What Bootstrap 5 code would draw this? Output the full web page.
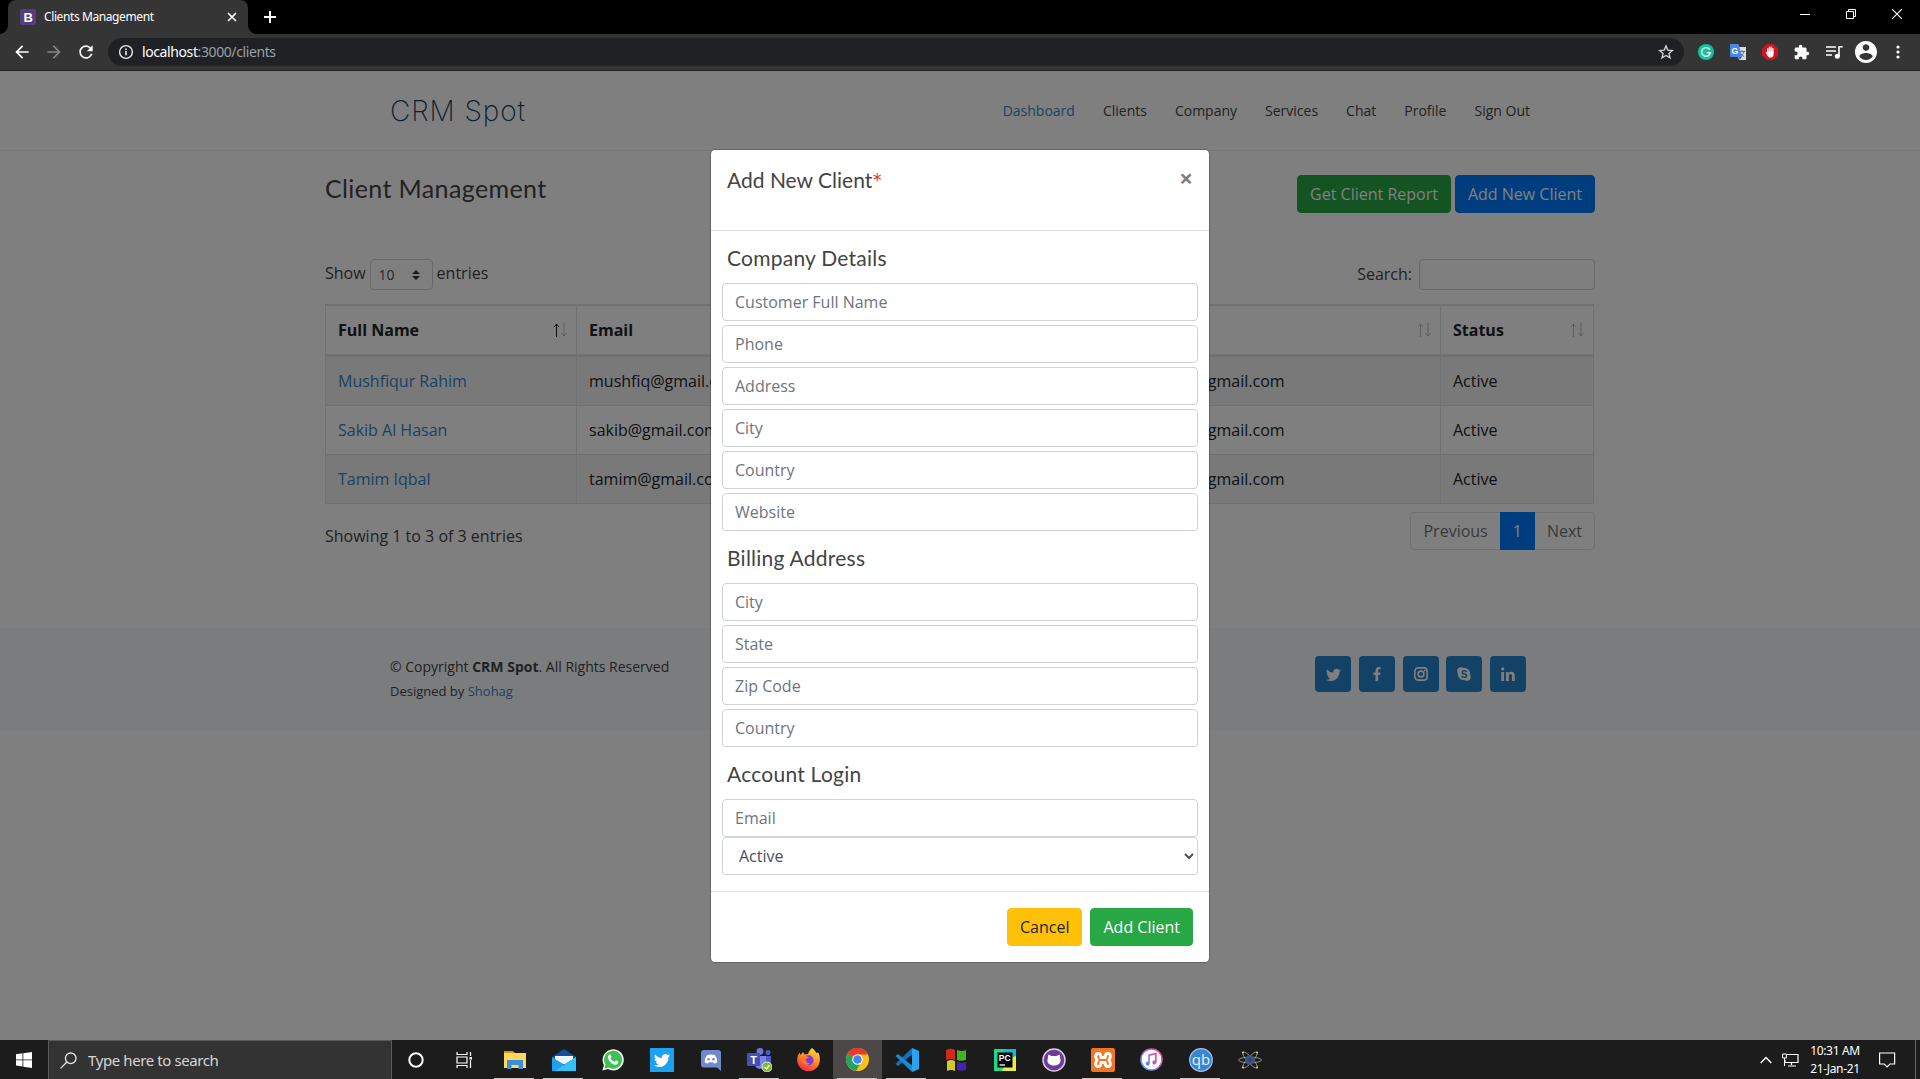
<!DOCTYPE html>
<html lang="en">
<head>
<meta charset="utf-8">
<title>Clients Management</title>
<link href="https://cdn.jsdelivr.net/npm/bootstrap@5.3.0/dist/css/bootstrap.min.css" rel="stylesheet">
<style>
  body { height: 1079px; overflow: hidden; font-family: "Open Sans", "Noto Sans", sans-serif; color: #444; background: #fff; }
  svg { display: block; flex: none; }
  .ui-font { font-family: "Noto Sans", "Open Sans", sans-serif; }

  /* browser chrome */
  .tabstrip { height: 34px; background: #000; padding-left: 8px; color: #fff; }
  .tab-item { width: 240px; height: 34px; background: #353535; border-radius: 8px 8px 0 0; padding: 0 11px 0 12px; font-size: 12px; letter-spacing: -.4px; position: relative; }
  .tab-item::before, .tab-item::after { content: ""; position: absolute; bottom: 0; width: 8px; height: 8px; }
  .tab-item::before { left: -8px; background: radial-gradient(circle at 0 0, #000 7.5px, #353535 8px); }
  .tab-item::after { right: -8px; background: radial-gradient(circle at 100% 0, #000 7.5px, #353535 8px); }
  .win-cell { width: 46px; height: 28px; }
  .toolbar { height: 37px; background: #353535; border-bottom: 1px solid #222; padding: 0 6px; }
  .tool-cell { width: 32px; height: 35px; }
  .omnibox { height: 28px; border-radius: 14px; background: #202124; margin: 0 6px; padding: 0 10px; font-size: 14px; letter-spacing: -.4px; line-height: 20px; color: #9aa0a6; }
  .omnibox b { color: #fff; font-weight: 400; }
  .omnibox span { padding-bottom: 1px; }

  /* page */
  .viewport { height: 969px; background: #fff; overflow: hidden; }
  .inner { width: 1140px; margin: 0 auto; }
  .site-head { height: 80px; border-bottom: 1px solid #f0f0f0; }
  .brand { font-family: Inter, sans-serif; font-weight: 200; font-size: 28px; letter-spacing: .9px; color: #124265; }
  .site-nav { gap: 28px; font-size: 14px; }
  .site-nav a { color: #124265; text-decoration: none; white-space: nowrap; }
  .site-nav a.on, .lnk { color: #3584c6 !important; text-decoration: none; }
  .board { width: 1270px; margin: 0 auto; padding-top: 24px; height: 477px; }
  .raleway { font-family: Lato, "Open Sans", sans-serif; font-weight: 400; color: #444; margin: 0; }
  .board-title { font-size: 25px; line-height: 27px; letter-spacing: .38px; }
  .btn { --bs-btn-border-radius: 4px; white-space: nowrap; }
  .btn-primary { --bs-btn-bg: #007bff; --bs-btn-border-color: #007bff; }
  .btn-success { --bs-btn-bg: #28a745; --bs-btn-border-color: #28a745; }
  .btn-warning { --bs-btn-bg: #ffc107; --bs-btn-border-color: #ffc107; --bs-btn-color: #212529; }
  .list-tools { margin-top: 46px; height: 31px; }
  .len-label { padding-bottom: 4px; }
  .len-box { width: 63px; height: 31px; border: 1px solid #ced4da; border-radius: 4px; font-size: 14px; color: #495057; padding: 0 12px 0 8px; margin: 0 4px; }
  .find-label { margin-right: 7px; padding-bottom: 2px; }
  .find-box { width: 176px; height: 31px; border: 1px solid #ced4da; border-radius: 4px; background: #fff; }
  .clients { width: 1269px; table-layout: fixed; margin: 14px 0 0; border: 1px solid #dee2e6; border-right: 0; border-collapse: separate; border-spacing: 0; color: #212529; }
  .clients > :not(caption) > * > * { padding: 12px; border: 0 solid #dee2e6; border-top-width: 1px; border-right-width: 1px; }
  .clients > tbody > tr > td.admin { padding-left: 14px; }
  .clients thead th { border-bottom-width: 2px; color: #212529; padding-right: 9px; }
  .clients tbody tr:nth-child(odd) td { background: #f2f2f2; box-shadow: none; }
  .list-foot { margin-top: 8px; }
  .pagination { --bs-pagination-border-color: #dee2e6; --bs-pagination-border-radius: 4px; --bs-pagination-disabled-bg: #fff; --bs-pagination-disabled-color: #6c757d; --bs-pagination-active-bg: #007bff; --bs-pagination-active-border-color: #007bff; }
  .site-foot { height: 103px; background: #f7f9fc; font-size: 14px; }
  .site-foot .by { font-size: 13px; line-height: 20px; }
  .socials { gap: 7.8px; padding-right: 3.8px; }
  .soc { width: 36px; height: 36px; border-radius: 4px; background: #2487ce; color: #fff; }

  /* dialog */
  .shade { position: absolute; inset: 0; background: rgba(0,0,0,.5); z-index: 10; }
  .modal.inpage { position: absolute; overflow: hidden; }
  .modal-dialog { margin-top: 78px; width: 500px; max-width: 500px; }
  .modal-content { --bs-modal-border-radius: 5px; border: 1px solid rgba(0,0,0,.2); border-radius: 5px; color: #444; }
  .modal-header { height: 81px; padding: 16px; align-items: flex-start; border-color: #dee2e6; }
  .modal-header, .modal-footer { border-color: #dee2e6; }
  .dlg-h { font-size: 21px; line-height: 22px; height: 24px; letter-spacing: .24px; }
  .dlg-title { padding-top: 3px; letter-spacing: 0; }
  .star { color: #e03a3c; font-family: Inter, sans-serif; font-weight: 300; font-size: 20px; line-height: 1; }
  .xmark { font-size: 24px; line-height: 1; font-weight: 700; color: #7f7f7f; }
  .fields { margin: 12px -5px 16px; display: flex; flex-direction: column; gap: 4px; }
  .form-control { height: 38px; border: 1px solid #ced4da; border-radius: 4px; color: #495057; }
  .form-control::placeholder { color: #6c757d; }
  select.form-control { appearance: auto; padding-right: 12px; }
  .modal-footer { padding: 16px 16px 16px 15px; gap: 8px; }
  .modal-footer > * { margin: 0; }

  /* taskbar */
  .taskbar { height: 39px; background: #1d1c1c; color: #fff; }
  .start { width: 48px; height: 39px; }
  .seek { width: 344px; height: 39px; background: #333; border: 1px solid #5a5a5a; border-bottom: 0; padding-left: 11px; font-size: 15px; letter-spacing: -.4px; color: #d6d6d6; }
  .seek-text { margin-left: 11px; }
  .app { width: 49px; height: 39px; position: relative; }
  .app.shift { padding-right: 2px; }
  .app.run::after { content: ""; position: absolute; bottom: 0; left: 4px; width: 40px; height: 1px; background: #c9c2c2; }
  .app.cur { background: #4c4848; }
  .net { margin-left: 10px; }
  .clock { font-size: 12px; line-height: 18px; width: 64px; letter-spacing: -.35px; }
  .note { margin: 0 17px 0 9px; }
  .peek { width: 5px; height: 39px; border-left: 1px solid #666; }
</style>
</head>
<body class="d-flex flex-column">

<div class="tabstrip d-flex align-items-center ui-font flex-shrink-0">
  <div class="tab-item d-flex align-items-center">
    <svg width="16" height="16" viewBox="0 0 16 16"><rect width="16" height="16" rx="2" fill="#563d7c"/><text x="8" y="12.6" font-size="13" font-weight="700" text-anchor="middle" fill="#fff" font-family="Liberation Sans">B</text></svg>
    <span class="ms-2 flex-grow-1">Clients Management</span>
    <svg width="10" height="10" viewBox="0 0 10 10"><path d="M1 1l8 8M9 1l-8 8" stroke="#fff" stroke-width="1.7"/></svg>
  </div>
  <svg class="ms-3" width="12" height="12" viewBox="0 0 12 12"><path d="M6 0v12M0 6h12" stroke="#fff" stroke-width="2"/></svg>
  <div class="ms-auto d-flex align-self-start">
    <div class="win-cell d-flex align-items-center justify-content-center"><svg width="10" height="10"><path d="M0 5.5h10" stroke="#fff"/></svg></div>
    <div class="win-cell d-flex align-items-center justify-content-center"><svg width="10" height="10"><path d="M.5 2.5h7v7h-7zM2.500 2.500v-2h7v7h-2" stroke="#fff" fill="none"/></svg></div>
    <div class="win-cell d-flex align-items-center justify-content-center"><svg width="10" height="10"><path d="M0 0l10 10M10 0L0 10" stroke="#fff" stroke-width="1.1"/></svg></div>
  </div>
</div>

<div class="toolbar d-flex align-items-center ui-font flex-shrink-0">
  <div class="tool-cell d-flex align-items-center justify-content-center"><svg width="20" height="20" viewBox="0 0 24 24" fill="#fff"><path d="M20 11H7.830l5.590-5.590L12 4l-8 8 8 8 1.410-1.410L7.830 13H20z"/></svg></div>
  <div class="tool-cell d-flex align-items-center justify-content-center"><svg width="20" height="20" viewBox="0 0 24 24" fill="#858585"><path d="M4 13h12.170l-5.590 5.590L12 20l8-8-8-8-1.410 1.410L16.170 11H4z"/></svg></div>
  <div class="tool-cell d-flex align-items-center justify-content-center"><svg width="20" height="20" viewBox="0 0 24 24" fill="#fff"><path d="M17.650 6.350A7.958 7.958 0 0 0 12 4c-4.420 0-7.990 3.580-7.990 8s3.570 8 7.990 8c3.730 0 6.840-2.550 7.730-6h-2.080A5.990 5.990 0 0 1 12 18c-3.310 0-6-2.690-6-6s2.690-6 6-6c1.660 0 3.140.69 4.220 1.780L13 11h7V4z"/></svg></div>
  <div class="omnibox d-flex align-items-center flex-grow-1">
    <svg width="16" height="16" viewBox="0 0 16 16"><circle cx="8" cy="8" r="6.400" fill="none" stroke="#e8eaed" stroke-width="1.400"/><path d="M8 7v4.200M8 4.400V6" stroke="#e8eaed" stroke-width="1.600"/></svg>
    <span class="ms-2"><b>localhost</b>:3000/clients</span>
    <svg class="ms-auto" width="16" height="16" viewBox="0 0 24 24"><path d="M12 2.800l2.700 6.300 6.900.6-5.200 4.500 1.600 6.700-6-3.600-6 3.600 1.600-6.700L2.400 9.700l6.900-.6z" fill="none" stroke="#d2d4d7" stroke-width="2"/></svg>
  </div>
  <div class="tool-cell d-flex align-items-center justify-content-center"><svg width="16" height="16" viewBox="0 0 16 16"><circle cx="8" cy="8" r="8" fill="#15c39a"/><path d="M11.800 5.600A4.400 4.400 0 1 0 12.400 8.700H8.700M10.700 10.800l1.700-2.100" fill="none" stroke="#fff" stroke-width="1.300"/></svg></div>
  <div class="tool-cell d-flex align-items-center justify-content-center"><svg width="16" height="16" viewBox="0 0 16 16"><path d="M6 3h10v13H9z" fill="#dadce0"/><path d="M9 7.500h6M12 6.300v1.200M14 7.500c-.5 2.500-2.500 4-4 5M10.700 9.500c.8 1.500 2.300 2.600 3.500 3.200" stroke="#5f6f86" fill="none"/><path d="M0 0h8.500L12 13H1a1 1 0 0 1-1-1z" fill="#4a86e8"/><path d="M9 13h2.800L9.700 16z" fill="#2a56c6"/><text x="4.900" y="9.500" font-size="8.500" font-weight="700" text-anchor="middle" fill="#fff" font-family="Liberation Sans">G</text></svg></div>
  <div class="tool-cell d-flex align-items-center justify-content-center"><svg width="16" height="16" viewBox="0 0 16 16"><path d="M4.700 0h6.600L16 4.700v6.600L11.300 16H4.700L0 11.300V4.700z" fill="#d8101c"/><path d="M5.700 9V5M7.400 9V3.400M9.100 9V2.900M10.800 9V4.400" stroke="#fff" stroke-width="1.400" stroke-linecap="round"/><path d="M3.600 8.300c.7-.5 1.200.1 1.500.7V7.500h6.400v3c0 2.300-1.300 3.100-3 3.100s-2.700-.6-4.900-5.300z" fill="#fff"/></svg></div>
  <div class="tool-cell d-flex align-items-center justify-content-center"><svg width="16" height="16" viewBox="1 0 23 23" fill="#fff"><path d="M20.500 11H19V7c0-1.100-.9-2-2-2h-4V3.500C13 2.120 11.880 1 10.500 1S8 2.120 8 3.500V5H4c-1.100 0-1.990.9-1.990 2v3.800H3.500c1.490 0 2.700 1.210 2.700 2.700s-1.210 2.700-2.700 2.700H2V20c0 1.100.9 2 2 2h3.800v-1.500c0-1.490 1.210-2.700 2.700-2.700s2.700 1.210 2.700 2.700V22H17c1.100 0 2-.9 2-2v-4h1.500c1.380 0 2.500-1.120 2.500-2.500S21.880 11 20.500 11z"/></svg></div>
  <div class="tool-cell d-flex align-items-center justify-content-center"><svg width="17" height="14" viewBox="0 0 17 14"><path d="M0 2h10M0 6h10M0 10h6" stroke="#fff" stroke-width="1.600"/><path d="M13 11V1.700h3.700" fill="none" stroke="#fff" stroke-width="1.600"/><circle cx="11.300" cy="11.200" r="2.500" fill="#fff"/></svg></div>
  <div class="tool-cell d-flex align-items-center justify-content-center"><svg width="22" height="22" viewBox="2 2 20 20" fill="#fff"><path d="M12 2C6.480 2 2 6.480 2 12s4.480 10 10 10 10-4.480 10-10S17.520 2 12 2zm0 3c1.660 0 3 1.340 3 3s-1.340 3-3 3-3-1.340-3-3 1.340-3 3-3zm0 14.200c-2.500 0-4.710-1.280-6-3.220.03-1.990 4-3.080 6-3.080 1.990 0 5.970 1.090 6 3.080-1.290 1.940-3.500 3.220-6 3.220z"/></svg></div>
  <div class="tool-cell d-flex align-items-center justify-content-center"><svg width="4" height="14" fill="#fff"><circle cx="2" cy="2" r="1.600"/><circle cx="2" cy="7" r="1.600"/><circle cx="2" cy="12" r="1.600"/></svg></div>
</div>

<main class="viewport position-relative flex-shrink-0">
  <header class="site-head">
    <div class="inner h-100 d-flex align-items-center justify-content-between">
      <div class="brand">CRM Spot</div>
      <nav class="site-nav d-flex">
        <a class="on">Dashboard</a><a>Clients</a><a>Company</a><a>Services</a><a>Chat</a><a>Profile</a><a>Sign Out</a>
      </nav>
    </div>
  </header>

  <section class="board">
    <div class="d-flex justify-content-between align-items-start">
      <h4 class="raleway board-title">Client Management</h4>
      <div class="d-flex gap-1"><button class="btn btn-success">Get Client Report</button><button class="btn btn-primary">Add New Client</button></div>
    </div>
    <div class="list-tools d-flex justify-content-between align-items-center">
      <div class="d-flex align-items-center"><span class="len-label">Show</span>
        <span class="len-box d-flex align-items-center justify-content-between">10
          <svg width="8" height="10" viewBox="0 0 8 10"><path d="M0 4l4-4 4 4zM0 6l4 4 4-4z" fill="#343a40"/></svg></span>
        <span class="len-label">entries</span></div>
      <div class="d-flex align-items-center"><span class="find-label">Search:</span><span class="find-box"></span></div>
    </div>
    <table class="table clients">
      <colgroup><col style="width:251px"><col style="width:300px"><col style="width:248px"><col style="width:316px"><col></colgroup>
      <thead><tr>
        <th><div class="d-flex justify-content-between align-items-center">Full Name<svg width="14" height="14" viewBox="0 0 14 14" fill="none" stroke="#212529"><path d="M3.500 14V1M1 4l2.500-3L6 4"/><path d="M11 0v13M8.500 10l2.500 3 2.500-3" opacity=".25"/></svg></div></th>
        <th>Email</th><th>Phone</th>
        <th><div class="d-flex justify-content-between align-items-center">Admin<svg width="14" height="14" viewBox="0 0 14 14" fill="none" stroke="#212529" opacity=".3"><path d="M3.500 14V1M1 4l2.500-3L6 4"/><path d="M11 0v13M8.500 10l2.500 3 2.500-3"/></svg></div></th>
        <th><div class="d-flex justify-content-between align-items-center">Status<svg width="14" height="14" viewBox="0 0 14 14" fill="none" stroke="#212529" opacity=".3"><path d="M3.500 14V1M1 4l2.500-3L6 4"/><path d="M11 0v13M8.500 10l2.500 3 2.500-3"/></svg></div></th>
      </tr></thead>
      <tbody>
        <tr><td><a class="lnk">Mushfiqur Rahim</a></td><td>mushfiq@gmail.com</td><td></td><td class="admin">shohag@gmail.com</td><td>Active</td></tr>
        <tr><td><a class="lnk">Sakib Al Hasan</a></td><td>sakib@gmail.com</td><td></td><td class="admin">shohag@gmail.com</td><td>Active</td></tr>
        <tr><td><a class="lnk">Tamim Iqbal</a></td><td>tamim@gmail.com</td><td></td><td class="admin">shohag@gmail.com</td><td>Active</td></tr>
      </tbody>
    </table>
    <div class="list-foot d-flex justify-content-between">
      <div class="pt-2 mt-1">Showing 1 to 3 of 3 entries</div>
      <ul class="pagination mb-0">
        <li class="page-item disabled"><span class="page-link">Previous</span></li>
        <li class="page-item active"><span class="page-link">1</span></li>
        <li class="page-item disabled"><span class="page-link">Next</span></li>
      </ul>
    </div>
  </section>

  <footer class="site-foot">
    <div class="inner h-100 d-flex justify-content-between">
      <div class="pt-4 mt-1">
        <div>© Copyright <strong>CRM Spot</strong>. All Rights Reserved</div>
        <div class="by mt-1">Designed by <a class="lnk">Shohag</a></div>
      </div>
      <div class="socials d-flex pt-4 mt-1">
        <span class="soc d-flex align-items-center justify-content-center"><svg width="15" height="15" viewBox="0 0 16 16" fill="#fff"><path d="M5.026 15c6.038 0 9.341-5.003 9.341-9.334 0-.14 0-.282-.006-.422A6.685 6.685 0 0 0 16 3.542a6.658 6.658 0 0 1-1.889.518 3.301 3.301 0 0 0 1.447-1.817 6.533 6.533 0 0 1-2.087.793A3.286 3.286 0 0 0 7.875 6.030a9.325 9.325 0 0 1-6.767-3.429 3.289 3.289 0 0 0 1.018 4.382A3.323 3.323 0 0 1 .64 6.575v.045a3.288 3.288 0 0 0 2.632 3.218 3.203 3.203 0 0 1-.865.115 3.230 3.230 0 0 1-.614-.057 3.283 3.283 0 0 0 3.067 2.277A6.588 6.588 0 0 1 .78 13.580a6.320 6.320 0 0 1-.78-.045A9.344 9.344 0 0 0 5.026 15z"/></svg></span>
        <span class="soc d-flex align-items-center justify-content-center"><svg width="14" height="14" viewBox="0 0 14 14" fill="#fff"><path d="M5.500 14V8H3.400V5.500h2.100V3.600C5.500 1.400 6.800.1 8.800.1c.9 0 1.800.1 1.800.1v2.100H9.500c-1 0-1.300.6-1.300 1.300v1.900h2.300L10.100 8H8.200v6z"/></svg></span>
        <span class="soc d-flex align-items-center justify-content-center"><svg width="14" height="14" viewBox="0 0 14 14"><rect x=".9" y=".9" width="12.200" height="12.200" rx="3.200" fill="none" stroke="#fff" stroke-width="1.600"/><circle cx="7" cy="7" r="2.900" fill="none" stroke="#fff" stroke-width="1.600"/><circle cx="10.700" cy="3.400" r=".9" fill="#fff"/></svg></span>
        <span class="soc d-flex align-items-center justify-content-center"><svg width="14" height="14" viewBox="0 0 14 14"><circle cx="7" cy="7" r="6.200" fill="#fff"/><circle cx="4" cy="4" r="3.800" fill="#fff"/><circle cx="10" cy="10" r="3.800" fill="#fff"/><text x="7" y="10.600" font-size="10" font-weight="700" text-anchor="middle" fill="#2487ce" font-family="Liberation Sans">S</text></svg></span>
        <span class="soc d-flex align-items-center justify-content-center"><svg width="14" height="14" viewBox="0 0 14 14" fill="#fff"><circle cx="1.700" cy="1.900" r="1.600"/><path d="M.3 4.900h2.800V14H.3zM5 4.900h2.600v1.300c.5-.9 1.400-1.500 2.700-1.500 2.700 0 3.500 1.700 3.500 4.200V14H11V9.500c0-1.300-.2-2.400-1.500-2.400S7.800 8.100 7.800 9.500V14H5z"/></svg></span>
      </div>
    </div>
  </footer>

  <div class="shade"></div>
  <div class="modal inpage d-block">
    <div class="modal-dialog">
      <div class="modal-content">
        <div class="modal-header">
          <h5 class="raleway dlg-h dlg-title">Add New Client<span class="star">*</span></h5>
          <span class="xmark">×</span>
        </div>
        <div class="modal-body pb-0">
          <h5 class="raleway dlg-h">Company Details</h5>
          <div class="fields">
            <input class="form-control" placeholder="Customer Full Name">
            <input class="form-control" placeholder="Phone">
            <input class="form-control" placeholder="Address">
            <input class="form-control" placeholder="City">
            <input class="form-control" placeholder="Country">
            <input class="form-control" placeholder="Website">
          </div>
          <h5 class="raleway dlg-h">Billing Address</h5>
          <div class="fields">
            <input class="form-control" placeholder="City">
            <input class="form-control" placeholder="State">
            <input class="form-control" placeholder="Zip Code">
            <input class="form-control" placeholder="Country">
          </div>
          <h5 class="raleway dlg-h">Account Login</h5>
          <div class="fields gap-0">
            <input class="form-control" placeholder="Email">
            <select class="form-control"><option>Active</option></select>
          </div>
        </div>
        <div class="modal-footer">
          <button class="btn btn-warning">Cancel</button>
          <button class="btn btn-success">Add Client</button>
        </div>
      </div>
    </div>
  </div>
</main>

<div class="taskbar d-flex align-items-center ui-font flex-shrink-0">
  <div class="start d-flex align-items-center justify-content-center"><svg width="16" height="16" viewBox="0 0 16 16" fill="#fff"><path d="M0 2.200l6.500-.9v6.200H0zM7.300 1.200L16 0v7.500H7.300zM0 8.300h6.500v6.200L0 13.600zM7.300 8.300H16V16l-8.700-1.300z"/></svg></div>
  <div class="seek d-flex align-items-center">
    <svg width="17" height="17" viewBox="0 0 17 17" fill="none" stroke="#e6e6e6" stroke-width="1.300"><circle cx="10.700" cy="6.300" r="5.300"/><path d="M6.900 10L.6 16.400"/></svg>
    <span class="seek-text">Type here to search</span>
  </div>
  <div class="app shift d-flex align-items-center justify-content-center"><svg width="16" height="16"><circle cx="8" cy="8" r="6.700" fill="none" stroke="#fff" stroke-width="2"/></svg></div>
  <div class="app shift d-flex align-items-center justify-content-center"><svg width="17" height="16" viewBox="0 0 17 16" fill="none" stroke="#fff" stroke-width="1.200"><path d="M1 0v2.500h10V0M1 16v-2.500h10V16M1 5h10v6H1zM14.500 0v4M14.500 8v8"/><path d="M13.500 5h2.500v2.500h-2.500z" fill="#fff" stroke="none"/></svg></div>
  <div class="app run d-flex align-items-center justify-content-center"><svg width="22" height="20" viewBox="0 0 22 20"><path d="M0 1h9l2 2H0z" fill="#d9930f"/><path d="M0 3h22v15H0z" fill="#ffd660"/><path d="M3 19V10h16v9h-4.500v-4h-7v4z" fill="#3a8fd6"/></svg></div>
  <div class="app run d-flex align-items-center justify-content-center"><svg width="24" height="22" viewBox="0 0 24 22"><path d="M0 8l12-8 12 8v6H0z" fill="#0f4f9f"/><path d="M3 7h18v8H3z" fill="#fff"/><path d="M0 8l12 7.500L24 8v14H0z" fill="#1f9ff0"/><path d="M24 8v14H3z" fill="#35c1f5"/><path d="M3 8h18l-9 6z" fill="#e9f4fb"/></svg></div>
  <div class="app d-flex align-items-center justify-content-center"><svg width="22" height="22" viewBox="0 0 22 22"><path d="M.4 21.600l1.500-5.600A10.600 10.600 0 1 1 6 20.100z" fill="#f4f4f4"/><path d="M2.400 19.600l1.100-4A9 9 0 1 1 6.700 18.600z" fill="#3dc154"/><path d="M7.400 5.600c.6-.3 1-.2 1.200.2l.9 2c.1.500-.4 1-.8 1.500.9 1.800 2 2.800 3.900 3.600l1.200-1.300c.7-.1 2.300.9 2.500 1.200.2 2-1.500 2.900-2.900 2.900-3.600-.5-7-3.800-7.500-7.300 0-1.200.6-2.200 1.500-2.800z" fill="#fff"/></svg></div>
  <div class="app d-flex align-items-center justify-content-center"><svg width="24" height="24" viewBox="-4 -4 24 24"><path d="M-4-4h24v24H-4z" fill="#1da1f2"/><path fill="#fff" d="M5.026 15c6.038 0 9.341-5.003 9.341-9.334l-.006-.422A6.700 6.700 0 0 0 16 3.542a6.700 6.700 0 0 1-1.889.518 3.300 3.300 0 0 0 1.447-1.817 6.500 6.500 0 0 1-2.087.793A3.286 3.286 0 0 0 7.875 6.030a9.300 9.300 0 0 1-6.767-3.429 3.300 3.300 0 0 0 1.018 4.382A3.300 3.300 0 0 1 .64 6.575a3.300 3.300 0 0 0 2.632 3.263 3.200 3.200 0 0 1-1.479.058 3.300 3.300 0 0 0 3.067 2.277A6.600 6.600 0 0 1 0 13.535 9.300 9.300 0 0 0 5.026 15z"/></svg></div>
  <div class="app d-flex align-items-center justify-content-center"><svg width="20" height="22" viewBox="0 0 20 22"><path d="M3 1h14a3 3 0 0 1 3 3v18l-4-3.500H3a3 3 0 0 1-3-3V4a3 3 0 0 1 3-3z" fill="#7388cc"/><path d="M6 6q4-1 8 0 2.500 4 2.300 7.200-2 1.500-3.300 1.300l-.9-1.200H7.900L7 14.500q-1.600 0-3.300-1.300Q3.600 9.500 6 6z" fill="#fff"/><circle cx="7.600" cy="10.300" r="1.300" fill="#7388cc"/><circle cx="12.400" cy="10.300" r="1.300" fill="#7388cc"/></svg></div>
  <div class="app run d-flex align-items-center justify-content-center"><svg width="25" height="24" viewBox="0 0 25 24"><circle cx="13" cy="3.500" r="3.400" fill="#6f78d8"/><circle cx="21" cy="4.500" r="2.500" fill="#5059c9"/><path d="M14 8h10v8q-1 4-5 4z" fill="#5059c9"/><path d="M8 8h11v8a6 6 0 0 1-11 2z" fill="#7b83eb"/><rect y="5" width="13" height="13" rx="1" fill="#464eb8"/><text x="6.500" y="15.500" font-size="11" font-weight="700" text-anchor="middle" fill="#fff" font-family="Liberation Sans">T</text><circle cx="20" cy="19" r="5" fill="#7fba2c" stroke="#fff" stroke-width=".8"/><path d="M17.500 19l2 2 3-3.800" fill="none" stroke="#fff" stroke-width="1.400"/></svg></div>
  <div class="app d-flex align-items-center justify-content-center"><svg width="23" height="23" viewBox="0 0 23 23"><defs><linearGradient id="fx" x1=".8" y1="0" x2=".3" y2="1"><stop offset="0" stop-color="#ffe040"/><stop offset=".5" stop-color="#ff8a1e"/><stop offset="1" stop-color="#f2254f"/></linearGradient></defs><path d="M15 0c3 2 3 3.500 4.500 5L21 4.500c1.500 2 2 4.500 1.800 7.500A11.300 11.300 0 0 1 .2 12C.2 8.500 1.200 7 2.500 4.500l1 2.500L6 4l1.500 2.500L11 6c1-3 2-4.500 4-6z" fill="url(#fx)"/><circle cx="11.500" cy="12.300" r="5" fill="#7a3bd6"/><path d="M5 9q4-2 7 .5-3 .5-3.500 2.500.5 3 4.500 3.500-5 3-7.500-1.500z" fill="#ff7b21"/></svg></div>
  <div class="app run cur d-flex align-items-center justify-content-center"><svg width="23" height="23" viewBox="0 0 24 24"><circle cx="12" cy="12" r="12" fill="#fbc116"/><path d="M12 12L1.600 6A12 12 0 0 0 10.500 23.900l5.200-9.500z" fill="#1fa463"/><path d="M12 12L1.600 6A12 12 0 0 1 22.900 6.800H12z" fill="#e33b2e"/><circle cx="12" cy="12" r="5.500" fill="#fff"/><circle cx="12" cy="12" r="4.400" fill="#4285f4"/></svg></div>
  <div class="app run d-flex align-items-center justify-content-center"><svg width="24" height="24" viewBox="0 0 24 24"><path d="M17 0l7 3v18l-7 3z" fill="#29a3ee"/><path d="M17 0v6.500L3 18 .5 16z" fill="#0c74c4"/><path d="M17 24v-6.500L3 6 .5 8z" fill="#1b8bd6"/></svg></div>
  <div class="app d-flex align-items-center justify-content-center"><svg width="22" height="24" viewBox="0 0 22 24"><path d="M1 2q5-2.500 9 0v10q-4-2-9 0z" fill="#cf2a1e"/><path d="M12 2q5 2 9 0v10q-5 1.500-9 0z" fill="#3fb51f"/><path d="M2 13q4-2 8 0v10q-4-2-8 0z" fill="#d0c92a"/><path d="M12 14q5 1.500 9 0v8q-5 1.500-9 0z" fill="#4323b5"/></svg></div>
  <div class="app d-flex align-items-center justify-content-center"><svg width="22" height="22" viewBox="0 0 22 22"><path d="M0 0h14v22H0z" fill="#21d789"/><path d="M10 0h12v14H10z" fill="#17b8c8"/><path d="M14 10l8-3v15H8z" fill="#e8ee3c"/><path d="M3.500 3.500h15v15h-15z" fill="#000"/><text x="10.700" y="11.500" font-size="8.500" font-weight="700" text-anchor="middle" fill="#fff" font-family="Liberation Sans">PC</text><path d="M5.500 16h5.500" stroke="#fff" stroke-width="1.300"/></svg></div>
  <div class="app d-flex align-items-center justify-content-center"><svg width="24" height="24" viewBox="0 0 24 24"><circle cx="12" cy="12" r="11" fill="#6e3a9b" stroke="#d9cbe6" stroke-width="1.500"/><path d="M6.500 6.500l3 1.500h5l3-1.500c.8 2 .6 3 .6 3.500 1.800 5-2 7.500-6.100 7.500S4 15 5.900 10c0-.5-.2-1.500.6-3.500z" fill="#fff"/></svg></div>
  <div class="app run d-flex align-items-center justify-content-center"><svg width="24" height="24" viewBox="0 0 24 24"><rect width="24" height="24" rx="2" fill="#f37623"/><path d="M7.500 5.500C4 5.500 4 9 6 12c-2 3-2 6.500 1.500 6.500 2.500 0 2-2.500 2.500-4h4c.5 1.500 0 4 2.500 4 3.500 0 3.500-3.500 1.500-6.500 2-3 2-6.500-1.500-6.500-2.500 0-2 2.500-2.500 4h-4c-.5-1.500 0-4-2.500-4z" fill="none" stroke="#fff" stroke-width="3"/></svg></div>
  <div class="app d-flex align-items-center justify-content-center"><svg width="23" height="23" viewBox="0 0 24 24"><defs><linearGradient id="it" x1="0" y1="1" x2="1" y2="0"><stop offset="0" stop-color="#38b6f2"/><stop offset=".5" stop-color="#b25be8"/><stop offset="1" stop-color="#fb4d6d"/></linearGradient></defs><circle cx="12" cy="12" r="11" fill="#fff" stroke="url(#it)" stroke-width="1.600"/><path d="M9.500 16V7.500l7-1.700v8.700" fill="none" stroke="url(#it)" stroke-width="1.800"/><circle cx="8" cy="16.300" r="2.100" fill="#6f7df0"/><circle cx="15" cy="15" r="2.100" fill="#d557b5"/></svg></div>
  <div class="app run d-flex align-items-center justify-content-center"><svg width="24" height="24" viewBox="0 0 24 24"><circle cx="12" cy="12" r="11.300" fill="#3d84cf" stroke="#9cc4ef" stroke-width="1.200"/><text x="12" y="16.500" font-size="15" text-anchor="middle" fill="#e6f1fc" font-family="Open Sans">qb</text></svg></div>
  <div class="app d-flex align-items-center justify-content-center"><svg width="24" height="18" viewBox="0 0 24 18" fill="none" stroke="#a8a69c" stroke-width=".8"><ellipse cx="12" cy="9" rx="11.500" ry="2.800"/><ellipse cx="12" cy="9" rx="10.500" ry="2.800" transform="rotate(48 12 9)"/><ellipse cx="12" cy="9" rx="10.500" ry="2.800" transform="rotate(-48 12 9)"/><circle cx="12" cy="9" r="4.800" fill="#34508a" fill-opacity=".85" stroke="none"/><g fill="#d8c46a" stroke="none"><circle cx="5" cy="1.500" r="1.100"/><circle cx="19" cy="1.500" r="1.100"/><circle cx="5" cy="16.500" r="1.100"/><circle cx="19" cy="16.500" r="1.100"/></g></svg></div>

  <div class="ms-auto d-flex align-items-center h-100">
    <svg width="12" height="8" viewBox="0 0 12 8"><path d="M.7 7L6 1.500 11.300 7" fill="none" stroke="#fff" stroke-width="1.400"/></svg>
    <svg class="net" width="17" height="14" viewBox="0 0 17 14"><path d="M5 1.500h11v8H3V7M9.500 9.500V12M6 13h8" fill="none" stroke="#fff" stroke-width="1.200"/><path d="M.6 1h3.800v4H.6zM2.500 5v8" fill="none" stroke="#fff"/></svg>
    <div class="clock text-center ms-1">10:31 AM<br>21-Jan-21</div>
    <svg class="note" width="22" height="18" viewBox="-3 0 22 18"><path d="M.6 2h15v11H11l-2.900 3L5.200 13H.6z" fill="none" stroke="#fff" stroke-width="1.200"/></svg>
    <div class="peek"></div>
  </div>
</div>

<script src="https://cdn.jsdelivr.net/npm/bootstrap@5.3.0/dist/js/bootstrap.bundle.min.js"></script>
</body>
</html>
